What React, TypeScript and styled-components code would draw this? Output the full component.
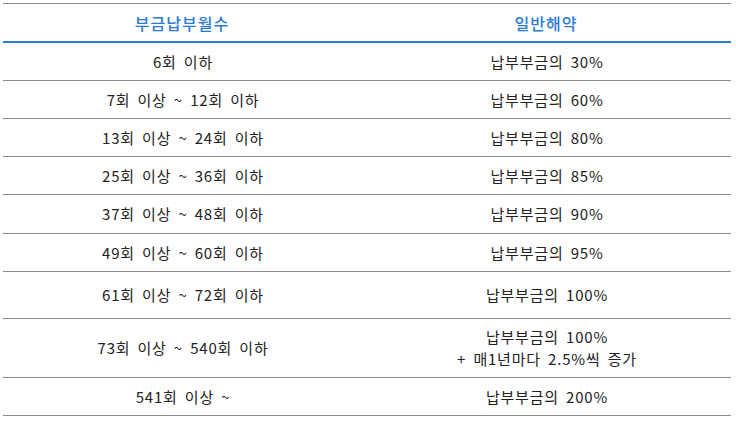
import React from "react";
import styled, { createGlobalStyle } from "styled-components";

const GlobalStyle = createGlobalStyle`
    html, body {
        margin: 0;
        padding: 0;
        background: #ffffff;
    }
    body {
        font-family: "Noto Sans CJK KR", "Noto Sans", sans-serif;
        color: #222222;
    }
`;

const Wrapper = styled.div`
    padding: 3px 5px 0 3px;
`;

const Table = styled.div`
    width: 728px;
    border-top: 1px solid #8a8a8a;
`;

const Head = styled.div`
    display: grid;
    grid-template-columns: 1fr 1fr;
    height: 37px;
    border-bottom: 2px solid #2a7bd4;
`;

const HeadCell = styled.div`
    display: flex;
    align-items: center;
    justify-content: center;
    padding-right: 6px;
    color: #2a7bd4;
    font-weight: 500;
    font-size: 16px;
    letter-spacing: 1px;
`;

const Row = styled.div<{ $height: number }>`
    display: grid;
    grid-template-columns: 1fr 1fr;
    height: ${({ $height }) => $height}px;
    border-bottom: 1px solid #8a8a8a;
`;

const Cell = styled.div`
    display: flex;
    flex-direction: column;
    align-items: center;
    justify-content: center;
    padding-right: 4px;
    font-size: 15px;
    line-height: 22px;
    letter-spacing: 0.8px;
    word-spacing: 3px;
    color: #222222;
    white-space: nowrap;
`;

interface IRate {
    period: string;
    rate: string[];
    height: number;
}

const rates: IRate[] = [
    { period: "6회 이하", rate: ["납부부금의 30%"], height: 37 },
    { period: "7회 이상 ~ 12회 이하", rate: ["납부부금의 60%"], height: 37 },
    { period: "13회 이상 ~ 24회 이하", rate: ["납부부금의 80%"], height: 37 },
    { period: "25회 이상 ~ 36회 이하", rate: ["납부부금의 85%"], height: 37 },
    { period: "37회 이상 ~ 48회 이하", rate: ["납부부금의 90%"], height: 38 },
    { period: "49회 이상 ~ 60회 이하", rate: ["납부부금의 95%"], height: 37 },
    { period: "61회 이상 ~ 72회 이하", rate: ["납부부금의 100%"], height: 46 },
    { period: "73회 이상 ~ 540회 이하", rate: ["납부부금의 100%", "+ 매1년마다 2.5%씩 증가"], height: 58 },
    { period: "541회 이상 ~", rate: ["납부부금의 200%"], height: 37 },
];

export default function App() {
    return (
        <Wrapper>
            <GlobalStyle />
            <Table>
                <Head>
                    <HeadCell>부금납부월수</HeadCell>
                    <HeadCell>일반해약</HeadCell>
                </Head>
                {rates.map((r) => (
                    <Row key={r.period} $height={r.height}>
                        <Cell>{r.period}</Cell>
                        <Cell>
                            {r.rate.map((line) => (
                                <span key={line}>{line}</span>
                            ))}
                        </Cell>
                    </Row>
                ))}
            </Table>
        </Wrapper>
    );
}
